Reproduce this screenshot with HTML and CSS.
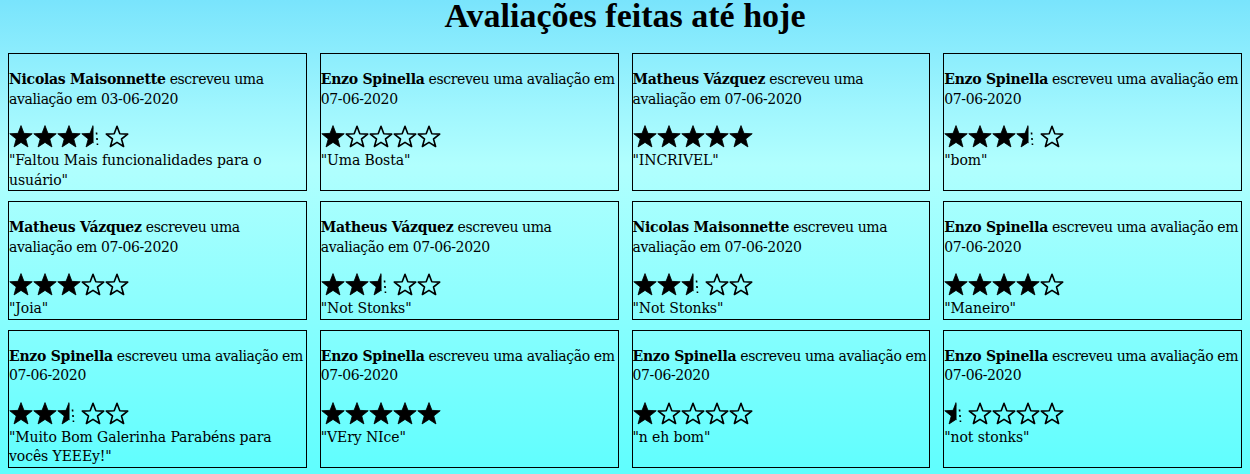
FILE: index.html
```html
<!DOCTYPE html>
<html lang="pt-BR">
<head>
<meta charset="utf-8">
<title>Avaliações</title>
<link rel="stylesheet" href="styles.css">
</head>
<body>
<svg class="defs" width="0" height="0" aria-hidden="true">
  <defs>
    <clipPath id="lefthalf"><rect x="0" y="0" width="12.5" height="24"/></clipPath>
    <symbol id="full" viewBox="0 0 24 23">
      <polygon points="12,0.6 14.94,8.36 23.22,8.75 16.76,13.95 18.94,21.95 12,17.4 5.06,21.95 7.24,13.95 0.78,8.75 9.06,8.36" fill="#000" stroke="#000" stroke-width="0.8" stroke-linejoin="round"/>
    </symbol>
    <symbol id="empty" viewBox="0 0 24 23">
      <polygon points="12,1.3 14.8,8.7 22.7,9.1 16.5,14 18.6,21.5 12,17.3 5.4,21.5 7.5,14 1.3,9.1 9.2,8.7" fill="none" stroke="#000" stroke-width="1.6" stroke-linejoin="round"/>
    </symbol>
    <symbol id="half" viewBox="0 0 24 23">
      <polygon clip-path="url(#lefthalf)" points="12,0.6 14.94,8.36 23.22,8.75 16.76,13.95 18.94,21.95 12,17.4 5.06,21.95 7.24,13.95 0.78,8.75 9.06,8.36" fill="#000" stroke="#000" stroke-width="0.8" stroke-linejoin="round"/>
      <line x1="15.5" y1="7.5" x2="16.5" y2="20" stroke="#000" stroke-width="1.6" stroke-dasharray="2 3.5"/>
    </symbol>
  </defs>
</svg>

<h1 class="title">Avaliações feitas até hoje</h1>

<main class="grid">
  <article class="card">
    <p class="who"><b>Nicolas Maisonnette</b> escreveu uma avaliação em 03-06-2020</p>
    <div class="stars"><svg class="star"><use href="#full"/></svg><svg class="star"><use href="#full"/></svg><svg class="star"><use href="#full"/></svg><svg class="star"><use href="#half"/></svg><svg class="star"><use href="#empty"/></svg></div>
    <p class="quote">"Faltou Mais funcionalidades para o usuário"</p>
  </article>
  <article class="card">
    <p class="who"><b>Enzo Spinella</b> escreveu uma avaliação em 07-06-2020</p>
    <div class="stars"><svg class="star"><use href="#full"/></svg><svg class="star"><use href="#empty"/></svg><svg class="star"><use href="#empty"/></svg><svg class="star"><use href="#empty"/></svg><svg class="star"><use href="#empty"/></svg></div>
    <p class="quote">"Uma Bosta"</p>
  </article>
  <article class="card">
    <p class="who"><b>Matheus Vázquez</b> escreveu uma avaliação em 07-06-2020</p>
    <div class="stars"><svg class="star"><use href="#full"/></svg><svg class="star"><use href="#full"/></svg><svg class="star"><use href="#full"/></svg><svg class="star"><use href="#full"/></svg><svg class="star"><use href="#full"/></svg></div>
    <p class="quote">"INCRIVEL"</p>
  </article>
  <article class="card">
    <p class="who"><b>Enzo Spinella</b> escreveu uma avaliação em 07-06-2020</p>
    <div class="stars"><svg class="star"><use href="#full"/></svg><svg class="star"><use href="#full"/></svg><svg class="star"><use href="#full"/></svg><svg class="star"><use href="#half"/></svg><svg class="star"><use href="#empty"/></svg></div>
    <p class="quote">"bom"</p>
  </article>

  <article class="card">
    <p class="who"><b>Matheus Vázquez</b> escreveu uma avaliação em 07-06-2020</p>
    <div class="stars"><svg class="star"><use href="#full"/></svg><svg class="star"><use href="#full"/></svg><svg class="star"><use href="#full"/></svg><svg class="star"><use href="#empty"/></svg><svg class="star"><use href="#empty"/></svg></div>
    <p class="quote">"Joia"</p>
  </article>
  <article class="card">
    <p class="who"><b>Matheus Vázquez</b> escreveu uma avaliação em 07-06-2020</p>
    <div class="stars"><svg class="star"><use href="#full"/></svg><svg class="star"><use href="#full"/></svg><svg class="star"><use href="#half"/></svg><svg class="star"><use href="#empty"/></svg><svg class="star"><use href="#empty"/></svg></div>
    <p class="quote">"Not Stonks"</p>
  </article>
  <article class="card">
    <p class="who"><b>Nicolas Maisonnette</b> escreveu uma avaliação em 07-06-2020</p>
    <div class="stars"><svg class="star"><use href="#full"/></svg><svg class="star"><use href="#full"/></svg><svg class="star"><use href="#half"/></svg><svg class="star"><use href="#empty"/></svg><svg class="star"><use href="#empty"/></svg></div>
    <p class="quote">"Not Stonks"</p>
  </article>
  <article class="card">
    <p class="who"><b>Enzo Spinella</b> escreveu uma avaliação em 07-06-2020</p>
    <div class="stars"><svg class="star"><use href="#full"/></svg><svg class="star"><use href="#full"/></svg><svg class="star"><use href="#full"/></svg><svg class="star"><use href="#full"/></svg><svg class="star"><use href="#empty"/></svg></div>
    <p class="quote">"Maneiro"</p>
  </article>

  <article class="card">
    <p class="who"><b>Enzo Spinella</b> escreveu uma avaliação em 07-06-2020</p>
    <div class="stars"><svg class="star"><use href="#full"/></svg><svg class="star"><use href="#full"/></svg><svg class="star"><use href="#half"/></svg><svg class="star"><use href="#empty"/></svg><svg class="star"><use href="#empty"/></svg></div>
    <p class="quote">"Muito Bom Galerinha Parabéns para vocês YEEEy!"</p>
  </article>
  <article class="card">
    <p class="who"><b>Enzo Spinella</b> escreveu uma avaliação em 07-06-2020</p>
    <div class="stars"><svg class="star"><use href="#full"/></svg><svg class="star"><use href="#full"/></svg><svg class="star"><use href="#full"/></svg><svg class="star"><use href="#full"/></svg><svg class="star"><use href="#full"/></svg></div>
    <p class="quote">"VEry NIce"</p>
  </article>
  <article class="card">
    <p class="who"><b>Enzo Spinella</b> escreveu uma avaliação em 07-06-2020</p>
    <div class="stars"><svg class="star"><use href="#full"/></svg><svg class="star"><use href="#empty"/></svg><svg class="star"><use href="#empty"/></svg><svg class="star"><use href="#empty"/></svg><svg class="star"><use href="#empty"/></svg></div>
    <p class="quote">"n eh bom"</p>
  </article>
  <article class="card">
    <p class="who"><b>Enzo Spinella</b> escreveu uma avaliação em 07-06-2020</p>
    <div class="stars"><svg class="star"><use href="#half"/></svg><svg class="star"><use href="#empty"/></svg><svg class="star"><use href="#empty"/></svg><svg class="star"><use href="#empty"/></svg><svg class="star"><use href="#empty"/></svg></div>
    <p class="quote">"not stonks"</p>
  </article>
</main>
</body>
</html>
```

FILE: styles.css
```css
html {
  background: #5ffefe;
}
body {
  margin: 0;
  padding: 0 8px 8px;
  min-height: 474px;
  box-sizing: border-box;
  font-family: "DejaVu Serif", "Liberation Serif", serif;
  font-size: 14px;
  letter-spacing: -0.38px;
  color: #000;
  background: linear-gradient(to bottom, #79e4fc 0px, #a2f7fe 115px, #b1fffe 165px, #8dfefe 300px, #5ffefe 474px);
}
b {
  letter-spacing: -0.25px;
}
.defs {
  position: absolute;
  width: 0;
  height: 0;
}
.title {
  margin: 0;
  height: 53px;
  line-height: 32px;
  text-align: center;
  font-family: "Liberation Serif", serif;
  font-weight: bold;
  font-size: 34px;
  letter-spacing: 0;
}
.grid {
  display: grid;
  grid-template-columns: repeat(4, 1fr);
  column-gap: 13px;
  row-gap: 10px;
}
.card {
  border: 1px solid #000;
}
.who {
  margin: 16px 0;
  line-height: 19.5px;
}
.stars {
  display: flex;
  height: 26px;
}
.star {
  width: 24px;
  height: 23px;
  flex: none;
}
.quote {
  margin: 0;
  line-height: 19.5px;
  letter-spacing: -0.1px;
}
```
